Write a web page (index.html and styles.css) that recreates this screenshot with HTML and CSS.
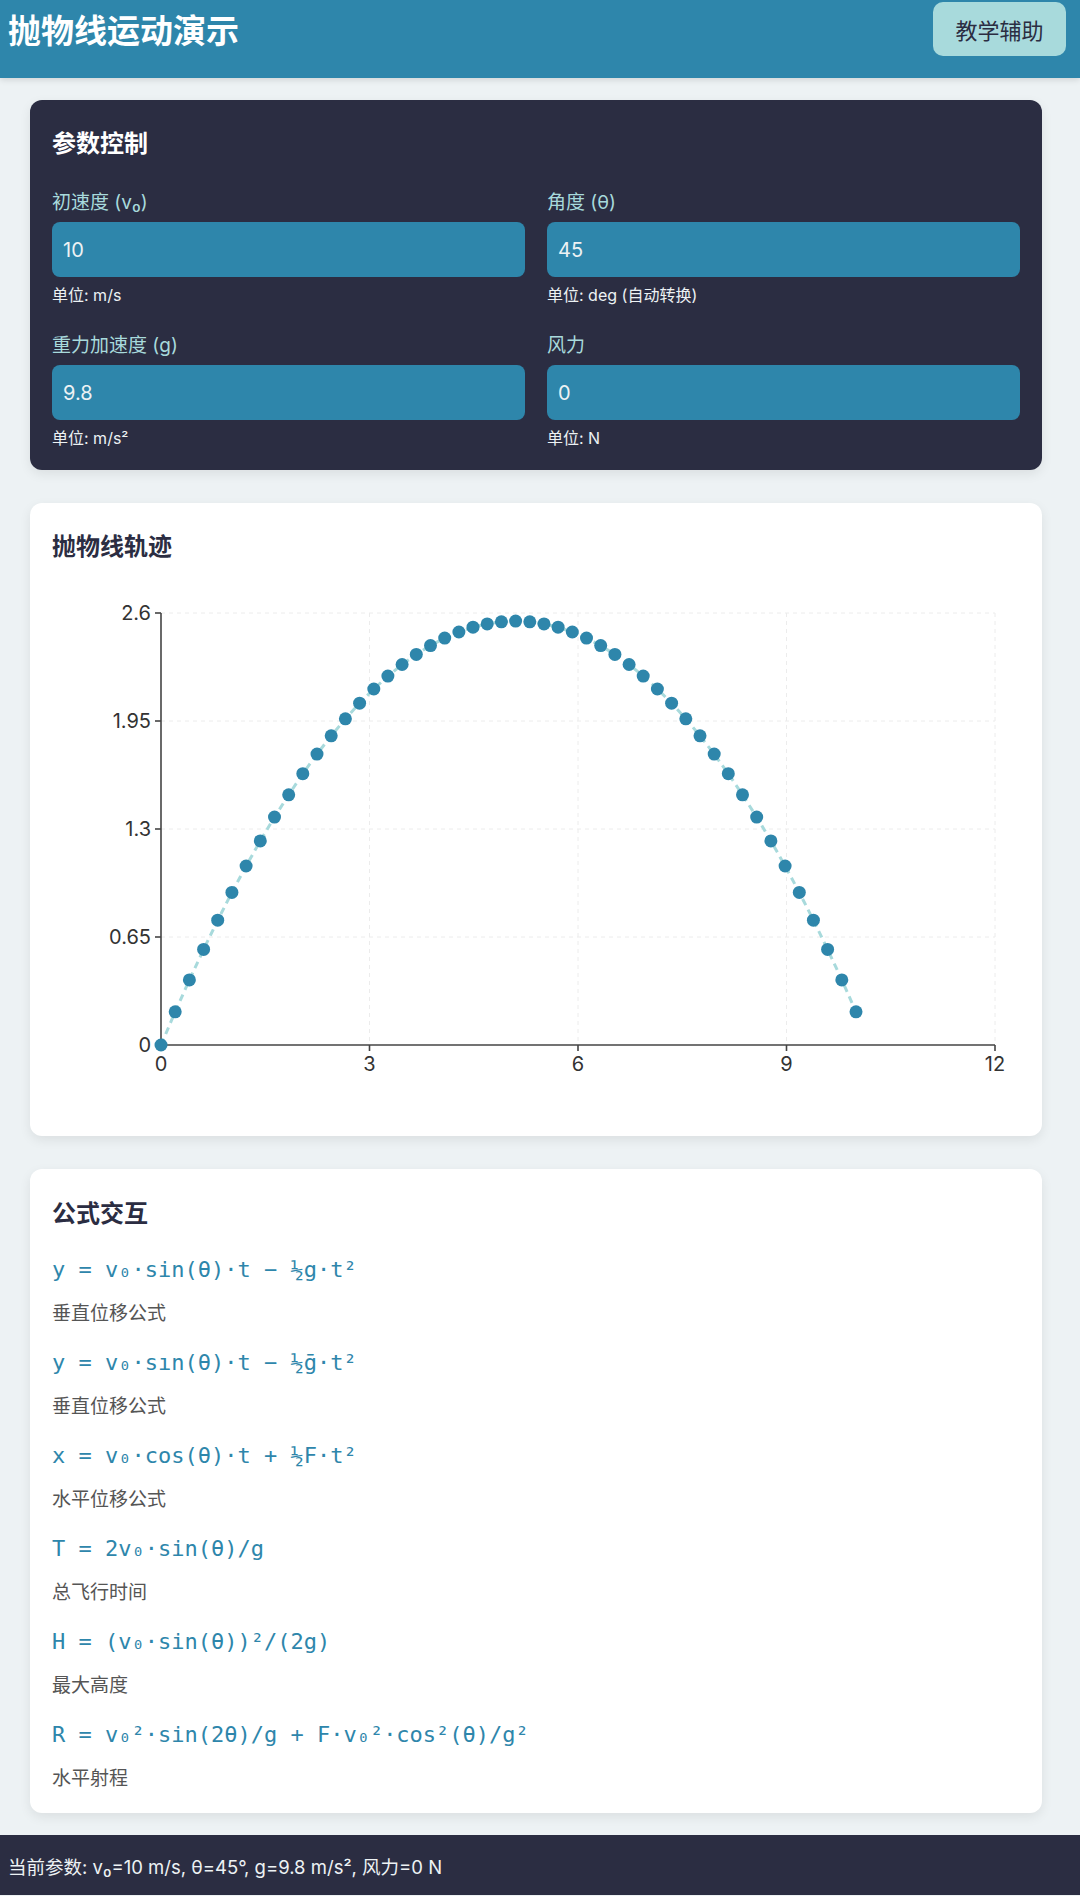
FILE: index.html
```html
<!DOCTYPE html>
<html lang="zh-CN">
<head>
<meta charset="utf-8">
<title>抛物线运动演示</title>
<link rel="stylesheet" href="styles.css">
</head>
<body>
<header class="topbar">
  <h1 class="app-title">抛物线运动演示</h1>
  <button class="help-btn">教学辅助</button>
</header>

<main class="content">
  <section class="card card-dark">
    <h2 class="card-title">参数控制</h2>
    <div class="param-grid">
      <div class="param">
        <label class="param-label">初速度 (v₀)</label>
        <input class="param-input" type="text" value="10">
        <div class="param-unit">单位: m/s</div>
      </div>
      <div class="param">
        <label class="param-label">角度 (θ)</label>
        <input class="param-input" type="text" value="45">
        <div class="param-unit">单位: deg (自动转换)</div>
      </div>
      <div class="param">
        <label class="param-label">重力加速度 (g)</label>
        <input class="param-input" type="text" value="9.8">
        <div class="param-unit">单位: m/s²</div>
      </div>
      <div class="param">
        <label class="param-label">风力</label>
        <input class="param-input" type="text" value="0">
        <div class="param-unit">单位: N</div>
      </div>
    </div>
  </section>

  <section class="card card-light chart-card">
    <h2 class="card-title dark">抛物线轨迹</h2>
    <svg class="chart" id="chart" width="968" height="550" viewBox="0 0 968 550">
      <g class="grid">
        <line x1="109" y1="376" x2="943" y2="376"/>
        <line x1="109" y1="268" x2="943" y2="268"/>
        <line x1="109" y1="160" x2="943" y2="160"/>
        <line x1="109" y1="52" x2="943" y2="52"/>
        <line x1="317.5" y1="52" x2="317.5" y2="484"/>
        <line x1="526" y1="52" x2="526" y2="484"/>
        <line x1="734.5" y1="52" x2="734.5" y2="484"/>
        <line x1="943" y1="52" x2="943" y2="484"/>
      </g>
      <g class="axis">
        <line x1="109" y1="52" x2="109" y2="484"/>
        <line x1="109" y1="484" x2="943" y2="484"/>
        <line x1="103" y1="484" x2="109" y2="484"/>
        <line x1="103" y1="376" x2="109" y2="376"/>
        <line x1="103" y1="268" x2="109" y2="268"/>
        <line x1="103" y1="160" x2="109" y2="160"/>
        <line x1="103" y1="52" x2="109" y2="52"/>
        <line x1="109" y1="484" x2="109" y2="490"/>
        <line x1="317.5" y1="484" x2="317.5" y2="490"/>
        <line x1="526" y1="484" x2="526" y2="490"/>
        <line x1="734.5" y1="484" x2="734.5" y2="490"/>
        <line x1="943" y1="484" x2="943" y2="490"/>
      </g>
      <g class="ylabels">
        <text x="99" y="491">0</text>
        <text x="99" y="383">0.65</text>
        <text x="99" y="275">1.3</text>
        <text x="99" y="167">1.95</text>
        <text x="99" y="59">2.6</text>
      </g>
      <g class="xlabels">
        <text x="109" y="510">0</text>
        <text x="317.5" y="510">3</text>
        <text x="526" y="510">6</text>
        <text x="734.5" y="510">9</text>
        <text x="943" y="510">12</text>
      </g>
      <polyline id="trail" class="trail" points=""/>
      <g id="dots" class="dots"></g>
    </svg>
  </section>

  <section class="card card-light formula-card">
    <h2 class="card-title dark">公式交互</h2>
    <div class="formula">
      <div class="formula-eq">y = v₀·sin(θ)·t − ½g·t²</div>
      <div class="formula-desc">垂直位移公式</div>
    </div>
    <div class="formula">
      <div class="formula-eq">y = v₀·sın(θ)·t − ½ḡ·t²</div>
      <div class="formula-desc">垂直位移公式</div>
    </div>
    <div class="formula">
      <div class="formula-eq">x = v₀·cos(θ)·t + ½F·t²</div>
      <div class="formula-desc">水平位移公式</div>
    </div>
    <div class="formula">
      <div class="formula-eq">T = 2v₀·sin(θ)/g</div>
      <div class="formula-desc">总飞行时间</div>
    </div>
    <div class="formula">
      <div class="formula-eq">H = (v₀·sin(θ))²/(2g)</div>
      <div class="formula-desc">最大高度</div>
    </div>
    <div class="formula">
      <div class="formula-eq">R = v₀²·sin(2θ)/g + F·v₀²·cos²(θ)/g²</div>
      <div class="formula-desc">水平射程</div>
    </div>
  </section>
</main>

<footer class="statusbar">当前参数: v₀=10 m/s, θ=45°, g=9.8 m/s², 风力=0 N</footer>

<script src="script.js"></script>
</body>
</html>
```

FILE: styles.css
```css
html, body {
  margin: 0;
  padding: 0;
}
body {
  background: #edf2f4;
  font-family: "Inter", "Noto Sans CJK SC", sans-serif;
  color: #2b2d42;
}

.topbar {
  height: 78px;
  box-sizing: border-box;
  background: #2e86ab;
  display: flex;
  justify-content: space-between;
  align-items: flex-start;
  padding: 2px 14px 0 8px;
  box-shadow: 0 2px 6px rgba(0, 0, 0, 0.12);
}
.app-title {
  margin: 0;
  font-size: 33px;
  line-height: 54px;
  font-weight: 700;
  color: #ffffff;
  font-family: "Noto Sans CJK SC", sans-serif;
}
.help-btn {
  height: 54px;
  width: 133px;
  border: none;
  border-radius: 10px;
  background: #a8dadc;
  color: #2b2d42;
  font-family: "Noto Sans CJK SC", sans-serif;
  font-size: 22px;
  padding: 0;
}

.content {
  padding: 22px 38px 22px 30px;
  display: flex;
  flex-direction: column;
  gap: 33px;
}

.card {
  border-radius: 12px;
  box-shadow: 0 4px 12px rgba(0, 0, 0, 0.08);
}
.card-dark {
  background: #2b2d42;
  padding: 26px 22px 22px;
}
.card-light {
  background: #ffffff;
}
.card-title {
  margin: 0;
  font-size: 24px;
  line-height: 32px;
  font-weight: 700;
  color: #ffffff;
  font-family: "Noto Sans CJK SC", sans-serif;
}
.card-title.dark {
  color: #2b2d42;
}

.param-grid {
  margin-top: 32px;
  display: grid;
  grid-template-columns: 1fr 1fr;
  column-gap: 22px;
  row-gap: 28px;
}
.param {
  display: flex;
  flex-direction: column;
}
.param-label {
  font-size: 19px;
  line-height: 26px;
  color: #a8dadc;
}
.param-input {
  margin-top: 6px;
  height: 55px;
  box-sizing: border-box;
  width: 100%;
  border: none;
  border-radius: 8px;
  background: #2e86ab;
  color: #edf2f4;
  font-family: "Inter", sans-serif;
  font-size: 20px;
  padding: 0 11px;
  outline: none;
}
.param-unit {
  margin-top: 8px;
  font-size: 16px;
  line-height: 20px;
  color: #edf2f4;
}

.chart-card {
  padding: 26px 22px 25px;
}
.chart {
  display: block;
}
.grid line {
  stroke: #ececec;
  stroke-width: 1;
  stroke-dasharray: 4 4;
}
.axis line {
  stroke: #444444;
  stroke-width: 1.6;
}
.ylabels text {
  font-family: "Inter", sans-serif;
  font-size: 20px;
  fill: #333333;
  text-anchor: end;
}
.xlabels text {
  font-family: "Inter", sans-serif;
  font-size: 20px;
  fill: #333333;
  text-anchor: middle;
}
.trail {
  fill: none;
  stroke: #a8dadc;
  stroke-width: 3;
  stroke-dasharray: 7 5;
}
.dots circle {
  fill: #2e86ab;
}

.formula-card {
  padding: 27px 22px 23px;
}
.formula-card .card-title {
  margin-bottom: 27px;
}
.formula + .formula {
  margin-top: 23px;
}
.formula-eq {
  font-family: "DejaVu Sans Mono", monospace;
  font-size: 22px;
  line-height: 30px;
  color: #2e86ab;
}
.formula-desc {
  margin-top: 14px;
  font-size: 19px;
  line-height: 26px;
  color: #555555;
  font-family: "Noto Sans CJK SC", sans-serif;
}

.statusbar {
  background: #2b2d42;
  color: #edf2f4;
  font-size: 18.5px;
  line-height: 22px;
  padding: 21px 8px 17px;
}
```

FILE: script.js
```js
(function () {
  var v0 = 10, theta = 45 * Math.PI / 180, g = 9.8;
  var vx = v0 * Math.cos(theta), vy = v0 * Math.sin(theta);
  var T = 2 * vy / g;
  var n = 50;
  var x0 = 109, y0 = 484, sx = 834 / 12, sy = 432 / 2.6;
  var pts = [];
  var dots = document.getElementById('dots');
  var ns = 'http://www.w3.org/2000/svg';
  for (var i = 0; i < n; i++) {
    var t = T * i / n;
    var x = vx * t, y = vy * t - 0.5 * g * t * t;
    var px = x0 + x * sx, py = y0 - y * sy;
    pts.push(px.toFixed(1) + ',' + py.toFixed(1));
    var c = document.createElementNS(ns, 'circle');
    c.setAttribute('cx', px.toFixed(1));
    c.setAttribute('cy', py.toFixed(1));
    c.setAttribute('r', '6.5');
    dots.appendChild(c);
  }
  document.getElementById('trail').setAttribute('points', pts.join(' '));
})();
```
